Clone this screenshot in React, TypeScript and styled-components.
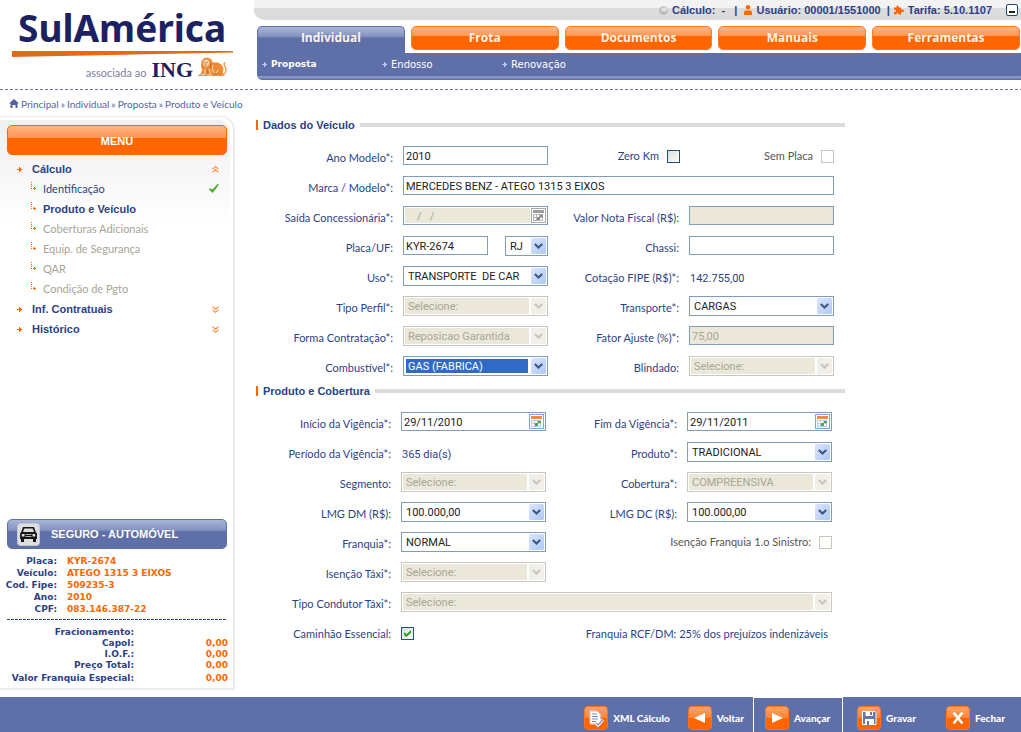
import React from "react";
import styled, { createGlobalStyle, css } from "styled-components";

const navy = "#2c3f87";
const blue = "#5f6fa8";
const orange = "#ff6600";
const fieldBorder = "#7f9db9";
const disabledBorder = "#c9c7ba";
const beige = "#ebe8d9";
const disabledText = "#a9a596";
const fieldFont = 'Roboto, "Liberation Sans", sans-serif';
const textFont = 'Lato, "Liberation Sans", sans-serif';
const boldFont = '"Liberation Sans", Arial, sans-serif';
const wideFont = '"DejaVu Sans", Verdana, sans-serif';
const humanFont = '"Open Sans", "Noto Sans", sans-serif';

const orangeGloss = `linear-gradient(to bottom, #ffb584 0, #ff9550 42%, ${orange} 43%)`;
const blueGloss = `linear-gradient(to bottom, #a9b4d6 0, #8492c1 36%, ${blue} 42%)`;
const dashes = (color: string, on: number, off: number) =>
  `repeating-linear-gradient(to right, ${color} 0 ${on}px, transparent ${on}px ${on + off}px)`;

const GlobalStyle = createGlobalStyle`
  *, *::before, *::after { box-sizing: border-box; }
  body { margin: 0; background: #fff; color: ${navy}; font: 11px/20px ${textFont}; }
  button, input, select { margin: 0; font: inherit; color: inherit; }
  a { color: inherit; text-decoration: none; }
  ul, dl, dd, h1, h2 { margin: 0; padding: 0; list-style: none; }
  svg { display: block; flex: none; }
`;

const Page = styled.div`
  display: flex;
  flex-direction: column;
  min-height: 100vh;
`;

/* ---------- header ---------- */

const Header = styled.header`
  display: grid;
  grid-template-columns: 254px minmax(0, 1fr);
  padding-bottom: 10px;
  background: ${dashes("#6a76a4", 3, 2)} bottom / 100% 1px no-repeat;
`;

const Brand = styled.a`
  display: flex;
  flex-direction: column;
  padding: 5px 21px 0 12px;
`;

const BrandName = styled.span`
  padding-left: 6px;
  color: #1b2161;
  font: bold 37px/46px "Noto Sans", ${humanFont};
`;

const BrandSub = styled.span`
  display: flex;
  justify-content: flex-end;
  align-items: baseline;
  gap: 5px;
  height: 23px;
  padding-right: 6px;
  color: #7d81a3;
  font: 11px/22px ${textFont};
`;

const Ing = styled.b`
  color: #1b2161;
  font: bold 22px/24px "Liberation Serif", serif;
`;

const TopArea = styled.div`
  display: flex;
  flex-direction: column;
`;

const StatusBar = styled.div`
  display: flex;
  justify-content: flex-end;
  align-items: center;
  gap: 4px;
  height: 20px;
  padding-right: 3px;
  border-radius: 0 0 0 10px;
  background: linear-gradient(to bottom, #f3f3f3 8px, #dcdcdc 8px);
  font: bold 11px/20px ${boldFont};
  white-space: pre;
`;

const MinimizeButton = styled.button`
  width: 12px;
  height: 12px;
  margin-left: 10px;
  padding: 0;
  border: 1px solid #1c4a7a;
  border-radius: 2px;
  background: linear-gradient(#222, #222) 2px 6px / 6px 2px no-repeat #fff;
`;

const Nav = styled.nav`
  margin: 6px 0 0 3px;
`;

const Tabs = styled.div`
  display: flex;
  gap: 6px;
  height: 27px;
  padding-right: 1px;
`;

const Tab = styled.a<{ $active?: boolean }>`
  flex: 1;
  height: 24px;
  border: 1px solid #ff7a22;
  border-radius: 5px;
  background: ${orangeGloss};
  color: #fff3e8;
  font: bold 12px/22px ${humanFont};
  text-align: center;
  ${(p) =>
    p.$active &&
    css`
      height: 27px;
      border-color: ${blue};
      border-bottom: 0;
      border-radius: 5px 5px 0 0;
      background: ${blueGloss};
    `}
`;

const SubNav = styled.div`
  display: flex;
  height: 27px;
  padding-left: 5px;
  border-radius: 0 0 0 5px;
  background: linear-gradient(to bottom, ${blue} 23px, #8894c3 23px 25px, ${blue} 26px);
  color: #fff;
  font: 10px/23px ${wideFont};
`;

const SubLink = styled.a<{ $active?: boolean }>`
  display: flex;
  align-items: center;
  gap: 4px;
  width: 120px;
  height: 23px;
  ${(p) => p.$active && "font-size: 9px; font-weight: bold;"}
`;

/* ---------- body and side menu ---------- */

const Body = styled.div`
  display: flex;
  flex: 1;
  padding-bottom: 7px;
`;

const Side = styled.aside`
  display: flex;
  flex-direction: column;
  flex: none;
  width: 235px;
`;

const Crumbs = styled.nav`
  display: flex;
  align-items: center;
  gap: 2px;
  height: 26px;
  padding: 2px 0 0 9px;
  color: #5263a0;
  font: 10px/20px ${textFont};
  white-space: nowrap;
`;

const Panel = styled.div`
  display: flex;
  flex-direction: column;
  flex: 1;
  padding: 8px 6px 4px 7px;
  border: 2px solid #ebebf1;
  border-width: 1px 2px 2px 0;
  border-radius: 0 14px 0 0;
  background: linear-gradient(to bottom, #efeff0 0, #fff 110px);
  box-shadow: inset -3px 3px 0 #fff;
`;

const MenuTitle = styled.h2`
  height: 30px;
  margin-bottom: 4px;
  border: 1px solid ${orange};
  border-radius: 5px;
  background: ${orangeGloss};
  color: #fff;
  font: bold 11px/30px ${boldFont};
  text-align: center;
`;

const MenuLink = styled.a<{ $tone?: "group" | "current" | "off" }>`
  display: flex;
  align-items: center;
  height: 20px;
  padding: 0 8px 0 ${(p) => (p.$tone === "group" ? 10 : 24)}px;
  gap: ${(p) => (p.$tone === "group" ? 10 : 6)}px;
  color: ${(p) => (p.$tone === "off" ? disabledText : navy)};
  ${(p) =>
    (p.$tone === "group" || p.$tone === "current") &&
    css`
      font-family: ${boldFont};
      font-weight: bold;
    `}
  > span {
    flex: 1;
  }
`;

const PolicyTitle = styled.h2`
  display: flex;
  align-items: center;
  gap: 11px;
  height: 30px;
  margin-top: auto;
  padding-left: 9px;
  border: 1px solid ${blue};
  border-radius: 5px;
  background: ${blueGloss};
  color: #fff;
  font: bold 11px/30px ${boldFont};
`;

const Facts = styled.dl`
  display: grid;
  grid-template-columns: 50px 1fr;
  column-gap: 10px;
  margin-top: 6px;
  padding-bottom: 5px;
  background: ${dashes(navy, 3, 1)} bottom / 100% 1px no-repeat;
  font: bold 9px/12px ${wideFont};
  white-space: nowrap;
  dt {
    justify-self: end;
  }
  dd {
    color: ${orange};
  }
`;

const Totals = styled.dl`
  display: grid;
  grid-template-columns: 127px 1fr;
  margin: 7px -1px 0 0;
  font: bold 9px/11px ${wideFont};
  white-space: nowrap;
  dt {
    justify-self: end;
  }
  dd {
    color: ${orange};
    text-align: right;
  }
  dt:last-of-type,
  dd:last-of-type {
    padding-top: 2px;
  }
`;

/* ---------- form ---------- */

const Form = styled.form`
  flex: 1;
  max-width: 610px;
  padding: 25px 0 0 21px;
`;

const SectionTitle = styled.h2`
  display: flex;
  align-items: center;
  gap: 5px;
  height: 20px;
  margin-bottom: 6px;
  font: bold 11px/20px ${boldFont};
  &::before {
    content: "";
    width: 2px;
    height: 10px;
    background: ${orange};
  }
  &::after {
    content: "";
    flex: 1;
    height: 4px;
    background: #dcdcdc;
  }
`;

const Grid = styled.div<{ $inset?: boolean }>`
  display: grid;
  grid-template-columns: ${(p) => (p.$inset ? 136 : 138)}px minmax(0, 1fr) 123px minmax(0, 1fr);
  grid-auto-rows: 30px;
  column-gap: 9px;
  padding-right: ${(p) => (p.$inset ? 13 : 11)}px;
`;

const Label = styled.label`
  padding: 7px 1px 0 0;
  text-align: right;
  white-space: nowrap;
`;

const Cell = styled.div<{ $wide?: boolean }>`
  display: flex;
  align-items: flex-start;
  justify-content: space-between;
  padding-top: 5px;
  font-family: ${fieldFont};
  ${(p) => p.$wide && "grid-column: 2 / -1;"}
`;

const TextInput = styled.input<{ $short?: boolean }>`
  width: ${(p) => (p.$short ? "85px" : "100%")};
  height: 19px;
  padding: 2px 2px 0;
  border: 1px solid ${fieldBorder};
  border-radius: 0;
  outline: 0;
  background: #fff;
  color: #222;
  &:disabled {
    background: ${beige};
    color: ${disabledText};
  }
`;

const DateBox = styled.div`
  display: flex;
  width: 100%;
  height: 19px;
  padding: 1px;
  border: 1px solid ${fieldBorder};
  background: #fff;
  input {
    flex: 1;
    width: 0;
    height: 15px;
    padding: 2px 1px 0;
    border: 0;
    outline: 0;
    background: #fff;
    color: #222;
  }
  input:disabled {
    padding-left: 12px;
    background: ${beige};
    color: ${disabledText};
    white-space: pre;
  }
  button {
    width: 16px;
    padding: 0 0 0 1px;
    border: 0;
    background: none;
  }
`;

const SelectBox = styled.div<{ $short?: boolean }>`
  display: grid;
  width: ${(p) => (p.$short ? "43px" : "100%")};
  height: 20px;
  > * {
    grid-area: 1 / 1;
  }
  > svg {
    place-self: center end;
    margin-right: 2px;
    pointer-events: none;
  }
`;

const NativeSelect = styled.select<{ $selected?: boolean }>`
  appearance: none;
  width: 100%;
  height: 20px;
  padding: 3px 19px 1px 2px;
  border: 1px solid ${fieldBorder};
  border-radius: 0;
  outline: 0;
  background: #fff;
  color: #222;
  line-height: 14px;
  text-indent: 2px;
  white-space: pre;
  ${(p) =>
    p.$selected &&
    css`
      background: linear-gradient(#316ac5, #316ac5) 2px 2px / calc(100% - 21px) 14px no-repeat #fff;
      color: #fff;
    `}
  &:disabled {
    border-color: ${disabledBorder};
    background: linear-gradient(${beige}, ${beige}) 1px 1px / calc(100% - 19px) 16px no-repeat #fff;
    color: ${disabledText};
    opacity: 1;
  }
`;

const CheckLabel = styled.label<{ $span?: boolean; $off?: boolean }>`
  display: flex;
  justify-content: flex-end;
  align-items: center;
  gap: 8px;
  height: 20px;
  margin-top: 5px;
  white-space: nowrap;
  ${(p) => p.$span && "grid-column: 3 / -1;"}
  ${(p) => p.$off && "color: #555;"}
`;

const Check = styled.input`
  appearance: none;
  flex: none;
  width: 13px;
  height: 13px;
  margin: 0;
  border: 1px solid #1c5180;
  background: linear-gradient(135deg, #dcdcd7, #fff);
  &:disabled {
    border-color: ${disabledBorder};
    background: #fff;
  }
  &:checked::after {
    content: "";
    display: block;
    width: 7px;
    height: 7px;
    margin: 2px;
    background: #21a121;
    clip-path: polygon(0 28%, 36% 60%, 100% 0, 100% 40%, 36% 100%, 0 70%);
  }
`;

const CheckCell = styled.div`
  padding-top: 10px;
  line-height: 0;
`;

const Value = styled.output`
  padding: 8px 0 0 1px;
  font-family: ${fieldFont};
`;

const Note = styled.p`
  grid-column: 3 / -1;
  margin: 0;
  padding: 7px 4px 0 0;
  text-align: right;
`;

/* ---------- footer ---------- */

const Footer = styled.footer`
  display: flex;
  justify-content: flex-end;
  height: 35px;
  background: ${blue};
`;

const Action = styled.button<{ $current?: boolean; $roomy?: boolean }>`
  display: flex;
  align-items: center;
  gap: 5px;
  min-width: ${(p) => (p.$roomy ? "89px" : "0")};
  padding: 6px ${(p) => (p.$roomy ? 14 : 9)}px 0;
  border: 0;
  background: none;
  color: #fff;
  font: 900 10px/20px ${textFont};
  ${(p) =>
    p.$current &&
    css`
      min-width: 90px;
      padding: 5px 11px 0;
      border: 1px solid #fff;
      border-bottom: 0;
    `}
`;

/* ---------- drawings ---------- */

const Lion = () => (
  <svg width="29" height="20" viewBox="0 0 29 20">
    <path
      d="M0 18.500 3 16.500 4 13 3 9 3.500 4 6 1.200 9.500.4 13 2l1.800 3.500L20 5.500l4 2.500 1.500 4-.8 4 2 2-2 1H0z"
      fill="#ee8a33"
    />
    <path d="M24 17.500c3 .3 4.300-2.500 4-5.500-.3-2.700-2-3.200-2-5 0-1 .7-1.600 1.500-1.500" fill="none" stroke="#ee8a33" strokeWidth="1.200" />
    <path d="M5 4.500 7 2.500l3 .3 1.500 2.700-1 3L8 10 5.500 8.500z" fill="#fcd9b4" />
    <path d="M5.800 5.300h1.500M8.800 5.300h1.200M7.800 5.500v2M6.800 8.300h2" stroke="#b8560f" strokeWidth="0.800" />
    <path d="M7 12v5M11 11l1.500 6M15 8l-1 4 3 5M20 13l-2 3 3 2M3 17.500h4M9 18h5" fill="none" stroke="#fde3c8" strokeWidth="0.900" />
    <path d="M12.500 6.500 13 10l-2 2M16 16.500l6 .5M9 12.500l1 4.500" fill="none" stroke="#bf5c12" strokeWidth="0.800" />
  </svg>
);

const Swoosh = () => (
  <svg width="221" height="6" viewBox="0 0 221 6" preserveAspectRatio="none">
    <path d="M0 0H221V1.500L0 6z" fill="#e8681a" />
  </svg>
);

const Arrow = ({ color }: { color: string }) => (
  <svg width="5" height="5" viewBox="0 0 5 5">
    <path d="M0 2h2V0h1v1h1v1h1v1H4v1H3v1H2V3H0z" fill={color} />
  </svg>
);

const Branch = () => (
  <svg width="6" height="14" viewBox="0 0 6 14">
    <path d="M0 0h1v1H0zM0 2h1v1H0zM0 4h1v1H0zM0 6h1v1H0zM2 6h1V5h1v1h1v1H4v1H3V7H2z" fill={orange} />
  </svg>
);

const Chevrons = ({ up }: { up?: boolean }) => (
  <svg width="7" height="7" viewBox="0 0 7 7">
    <path
      d={up ? "M.5 3.200l3-2.500 3 2.500M.5 6.300l3-2.500 3 2.500" : "M.5.700l3 2.500 3-2.500M.5 3.800l3 2.500 3-2.500"}
      fill="none"
      stroke="#ff8533"
      strokeWidth="1.100"
    />
  </svg>
);

const Tick = () => (
  <svg width="10" height="10" viewBox="0 0 10 10">
    <path d="M0 5.500 1.500 4 3.300 5.800 8.500 0 10 .5 3.600 9z" fill="#3fae22" />
  </svg>
);

const Home = () => (
  <svg width="10" height="10" viewBox="0 0 10 10">
    <path d="M5 0l5 4.500H8.500V9h-2V6h-3v3h-2V4.500H0z" fill="#5263a0" />
  </svg>
);

const Dot = () => (
  <svg width="9" height="9" viewBox="0 0 9 9">
    <circle cx="4.500" cy="4.500" r="4.300" fill="#b9b9b9" />
    <ellipse cx="5" cy="3.500" rx="3" ry="2.300" fill="#dedede" />
  </svg>
);

const Person = () => (
  <svg width="8" height="10" viewBox="0 0 8 10">
    <circle cx="4" cy="2.300" r="2.200" fill={orange} />
    <path d="M0 10V7.500Q0 5.500 2 5.500h4q2 0 2 2V10z" fill={orange} />
  </svg>
);

const Puzzle = () => (
  <svg width="10" height="10" viewBox="0 0 10 10">
    <path d="M0 2.500h2.500Q2 .5 3.500.5T4.700 2.500H7v2q3-.5 3 1.300T7 7v2.500H4.700Q5 8 3.500 8T2.500 9.500H0V7q2 0 2-1.200T0 4.700z" fill={orange} />
  </svg>
);

const DropArrow = ({ off }: { off?: boolean }) => (
  <svg width="15" height="16" viewBox="0 0 15 16">
    <defs>
      <linearGradient id="drop-on" x1="0" y1="0" x2="1" y2="1">
        <stop offset="0" stopColor="#dbe6fd" />
        <stop offset="1" stopColor="#aec8f7" />
      </linearGradient>
    </defs>
    <rect width="15" height="16" rx="1.500" fill={off ? "#f0efe9" : "url(#drop-on)"} />
    <path d="M3.800 6l3.700 3.500L11.200 6" fill="none" stroke={off ? "#c7c6bc" : "#40597f"} strokeWidth="2.200" />
  </svg>
);

const Calendar = ({ off }: { off?: boolean }) => (
  <svg width="15" height="15" viewBox="0 0 15 15">
    <rect x="0.500" y="0.500" width="14" height="14" fill="#fff" stroke={off ? "#a9a9a9" : "#7ea6d8"} />
    <rect x="2" y="2" width="11" height="3" fill={off ? "#9d9d9d" : "#f58a3c"} />
    <path d="M2 6.500h10M2 9.500h10M2 12.500h10M2.500 6v7M5.500 6v7M8.500 6v7M11.500 6v7" stroke={off ? "#b5b5b5" : "#b9cbe6"} />
    <path d="M9 7h3v2H9zM6 9h3v3H6z" fill={off ? "#8a8a8a" : "#57a34c"} />
  </svg>
);

const Car = () => (
  <svg width="23" height="23" viewBox="0 0 23 23">
    <rect x="0.500" y="0.500" width="22" height="22" rx="3" fill="#dedede" stroke="#c2c6d4" />
    <path
      d="M6 4h11l1.800 5 1.200 1.500V16h-1v3h-3v-3H7v3H4v-3H3v-5.500L4.200 9zM7.200 5.500 6 9h11l-1.200-3.500zM4.800 11v2.500h2.700V11zM15.500 11v2.500h2.700V11zM8.500 11.300v.8h6v-.8zM8.500 13.300v.8h6v-.8z"
      fill="#151515"
      fillRule="evenodd"
    />
  </svg>
);

const Tile = ({ children }: { children: React.ReactNode }) => (
  <svg width="24" height="24" viewBox="0 0 24 24">
    <defs>
      <linearGradient id="tile" x1="0" y1="0" x2="0" y2="1">
        <stop offset="0" stopColor="#ffa76c" />
        <stop offset="0.480" stopColor="#ff8436" />
        <stop offset="0.500" stopColor={orange} />
      </linearGradient>
    </defs>
    <rect x="0.500" y="0.500" width="23" height="23" rx="3.500" fill="url(#tile)" stroke="#ff7420" />
    {children}
  </svg>
);

const SheetTile = () => (
  <Tile>
    <path d="M6 5h7l3.500 3.500V18H6z" fill="#fff" stroke="#c4c9de" />
    <path d="M8 8h5M8 10.500h6M8 13h6M8 15.500h4" stroke="#7d89b8" />
    <path d="M12 17l2 2 5-5.500" fill="none" stroke="#fff" strokeWidth="3" />
    <path d="M12 17l2 2 5-5.500" fill="none" stroke="#7d89b8" strokeWidth="1.200" />
  </Tile>
);

const DiskTile = () => (
  <Tile>
    <path d="M5 5h13l1.500 1.500V19H5z" fill="#6675aa" />
    <path d="M5.500 5.500h12.500l1 1V18.500H5.500z" fill="none" stroke="#fff" />
    <path d="M8.500 5h7.500v5H8.500zM8 13h9v6H8z" fill="#fff" />
    <path d="M13 6h2v3h-2zM10 15h2v4h-2z" fill="#6675aa" />
  </Tile>
);

/* ---------- field parts ---------- */

type SelectProps = {
  id: string;
  value: string;
  off?: boolean;
  short?: boolean;
  selected?: boolean;
  ariaLabel?: string;
};

const Select = ({ id, value, off, short, selected, ariaLabel }: SelectProps) => (
  <SelectBox $short={short}>
    <NativeSelect id={id} disabled={off} $selected={selected} aria-label={ariaLabel}>
      <option>{value}</option>
    </NativeSelect>
    <DropArrow off={off} />
  </SelectBox>
);

type FieldProps = { id: string; label: string; wide?: boolean; children: React.ReactNode };

const Field = ({ id, label, wide, children }: FieldProps) => (
  <>
    <Label htmlFor={id}>{label}</Label>
    <Cell $wide={wide}>{children}</Cell>
  </>
);

const DateField = ({ id, label, value, off }: { id: string; label: string; value: string; off?: boolean }) => (
  <Field id={id} label={label}>
    <DateBox>
      <input id={id} defaultValue={value} disabled={off} />
      <button type="button" disabled={off} aria-label="Calendário">
        <Calendar off={off} />
      </button>
    </DateBox>
  </Field>
);

const policy = [
  ["Placa:", "KYR-2674"],
  ["Veículo:", "ATEGO 1315 3 EIXOS"],
  ["Cod. Fipe:", "509235-3"],
  ["Ano:", "2010"],
  ["CPF:", "083.146.387-22"],
];

const totals = [
  ["Fracionamento:", ""],
  ["Capol:", "0,00"],
  ["I.O.F.:", "0,00"],
  ["Preço Total:", "0,00"],
  ["Valor Franquia Especial:", "0,00"],
];

const pendingSteps = ["Coberturas Adicionais", "Equip. de Segurança", "QAR", "Condição de Pgto"];

export default function App() {
  return (
    <Page>
      <GlobalStyle />
      <Header>
        <Brand href="#">
          <BrandName>SulAmérica</BrandName>
          <Swoosh />
          <BrandSub>
            associada ao <Ing>ING</Ing>
            <Lion />
          </BrandSub>
        </Brand>
        <TopArea>
          <StatusBar>
            <Dot />
            <span>{"Cálculo:  -   | "}</span>
            <Person />
            <span>{"Usuário: 00001/1551000  |"}</span>
            <Puzzle />
            <span>Tarifa: 5.10.1107</span>
            <MinimizeButton aria-label="Minimizar" />
          </StatusBar>
          <Nav>
            <Tabs>
              <Tab href="#" $active>Individual</Tab>
              <Tab href="#">Frota</Tab>
              <Tab href="#">Documentos</Tab>
              <Tab href="#">Manuais</Tab>
              <Tab href="#">Ferramentas</Tab>
            </Tabs>
            <SubNav>
              <SubLink href="#" $active><Arrow color="#b9c4ff" />Proposta</SubLink>
              <SubLink href="#"><Arrow color="#b9c4ff" />Endosso</SubLink>
              <SubLink href="#"><Arrow color="#b9c4ff" />Renovação</SubLink>
            </SubNav>
          </Nav>
        </TopArea>
      </Header>

      <Body>
        <Side>
          <Crumbs>
            <Home />
            <a href="#">Principal</a> » <a href="#">Individual</a> » <a href="#">Proposta</a> »{" "}
            <a href="#">Produto e Veículo</a>
          </Crumbs>
          <Panel>
            <MenuTitle>MENU</MenuTitle>
            <ul>
              <li><MenuLink href="#" $tone="group"><Arrow color={orange} /><span>Cálculo</span><Chevrons up /></MenuLink></li>
              <li><MenuLink href="#"><Branch /><span>Identificação</span><Tick /></MenuLink></li>
              <li><MenuLink href="#" $tone="current"><Branch /><span>Produto e Veículo</span></MenuLink></li>
              {pendingSteps.map((step) => (
                <li key={step}><MenuLink href="#" $tone="off"><Branch /><span>{step}</span></MenuLink></li>
              ))}
              <li><MenuLink href="#" $tone="group"><Arrow color={orange} /><span>Inf. Contratuais</span><Chevrons /></MenuLink></li>
              <li><MenuLink href="#" $tone="group"><Arrow color={orange} /><span>Histórico</span><Chevrons /></MenuLink></li>
            </ul>
            <PolicyTitle><Car />SEGURO - AUTOMÓVEL</PolicyTitle>
            <Facts>
              {policy.map(([name, value]) => (
                <React.Fragment key={name}><dt>{name}</dt><dd>{value}</dd></React.Fragment>
              ))}
            </Facts>
            <Totals>
              {totals.map(([name, value]) => (
                <React.Fragment key={name}><dt>{name}</dt><dd>{value}</dd></React.Fragment>
              ))}
            </Totals>
          </Panel>
        </Side>

        <Form>
          <SectionTitle>Dados do Veículo</SectionTitle>
          <Grid>
            <Field id="ano" label="Ano Modelo*:"><TextInput id="ano" defaultValue="2010" /></Field>
            <CheckLabel>Zero Km <Check type="checkbox" /></CheckLabel>
            <CheckLabel $off>Sem Placa <Check type="checkbox" disabled /></CheckLabel>

            <Field id="modelo" label="Marca / Modelo*:" wide>
              <TextInput id="modelo" defaultValue="MERCEDES BENZ - ATEGO 1315 3 EIXOS" />
            </Field>

            <DateField id="saida" label="Saída Concessionária*:" value="/   /" off />
            <Field id="nota" label="Valor Nota Fiscal (R$):"><TextInput id="nota" disabled /></Field>

            <Field id="placa" label="Placa/UF:">
              <TextInput id="placa" defaultValue="KYR-2674" $short />
              <Select id="uf" value="RJ" ariaLabel="UF" short />
            </Field>
            <Field id="chassi" label="Chassi:"><TextInput id="chassi" /></Field>

            <Field id="uso" label="Uso*:"><Select id="uso" value={"TRANSPORTE\u00a0 DE CAR"} /></Field>
            <Label htmlFor="fipe">Cotação FIPE (R$)*:</Label>
            <Value id="fipe">142.755,00</Value>

            <Field id="perfil" label="Tipo Perfil*:"><Select id="perfil" value="Selecione:" off /></Field>
            <Field id="transporte" label="Transporte*:"><Select id="transporte" value="CARGAS" /></Field>

            <Field id="forma" label="Forma Contratação*:"><Select id="forma" value="Reposicao Garantida" off /></Field>
            <Field id="fator" label="Fator Ajuste (%)*:"><TextInput id="fator" defaultValue="75,00" disabled /></Field>

            <Field id="combustivel" label="Combustível*:"><Select id="combustivel" value="GAS (FABRICA)" selected /></Field>
            <Field id="blindado" label="Blindado:"><Select id="blindado" value="Selecione:" off /></Field>
          </Grid>

          <SectionTitle>Produto e Cobertura</SectionTitle>
          <Grid $inset>
            <DateField id="inicio" label="Início da Vigência*:" value="29/11/2010" />
            <DateField id="fim" label="Fim da Vigência*:" value="29/11/2011" />

            <Label htmlFor="periodo">Período da Vigência*:</Label>
            <Value id="periodo">365 dia(s)</Value>
            <Field id="produto" label="Produto*:"><Select id="produto" value="TRADICIONAL" /></Field>

            <Field id="segmento" label="Segmento:"><Select id="segmento" value="Selecione:" off /></Field>
            <Field id="cobertura" label="Cobertura*:"><Select id="cobertura" value="COMPREENSIVA" off /></Field>

            <Field id="lmgdm" label="LMG DM (R$):"><Select id="lmgdm" value="100.000,00" /></Field>
            <Field id="lmgdc" label="LMG DC (R$):"><Select id="lmgdc" value="100.000,00" /></Field>

            <Field id="franquia" label="Franquia*:"><Select id="franquia" value="NORMAL" /></Field>
            <CheckLabel $span $off>Isenção Franquia 1.o Sinistro: <Check type="checkbox" disabled /></CheckLabel>

            <Field id="taxi" label="Isenção Táxi*:"><Select id="taxi" value="Selecione:" off /></Field>
            <span />
            <span />

            <Field id="condutor" label="Tipo Condutor Táxi*:" wide><Select id="condutor" value="Selecione:" off /></Field>

            <Label htmlFor="caminhao">Caminhão Essencial:</Label>
            <CheckCell><Check id="caminhao" type="checkbox" defaultChecked /></CheckCell>
            <Note>Franquia RCF/DM: 25% dos prejuízos indenizáveis</Note>
          </Grid>
        </Form>
      </Body>

      <Footer>
        <Action type="button"><SheetTile />XML Cálculo</Action>
        <Action type="button"><Tile><path d="M17 7v10L6 12z" fill="#fff" /></Tile>Voltar</Action>
        <Action type="button" $current><Tile><path d="M7 7v10l11-5z" fill="#fff" /></Tile>Avançar</Action>
        <Action type="button" $roomy><DiskTile />Gravar</Action>
        <Action type="button" $roomy><Tile><path d="M7.500 6.500l9 11M16.500 6.500l-9 11" stroke="#fff" strokeWidth="2.600" /></Tile>Fechar</Action>
      </Footer>
    </Page>
  );
}
